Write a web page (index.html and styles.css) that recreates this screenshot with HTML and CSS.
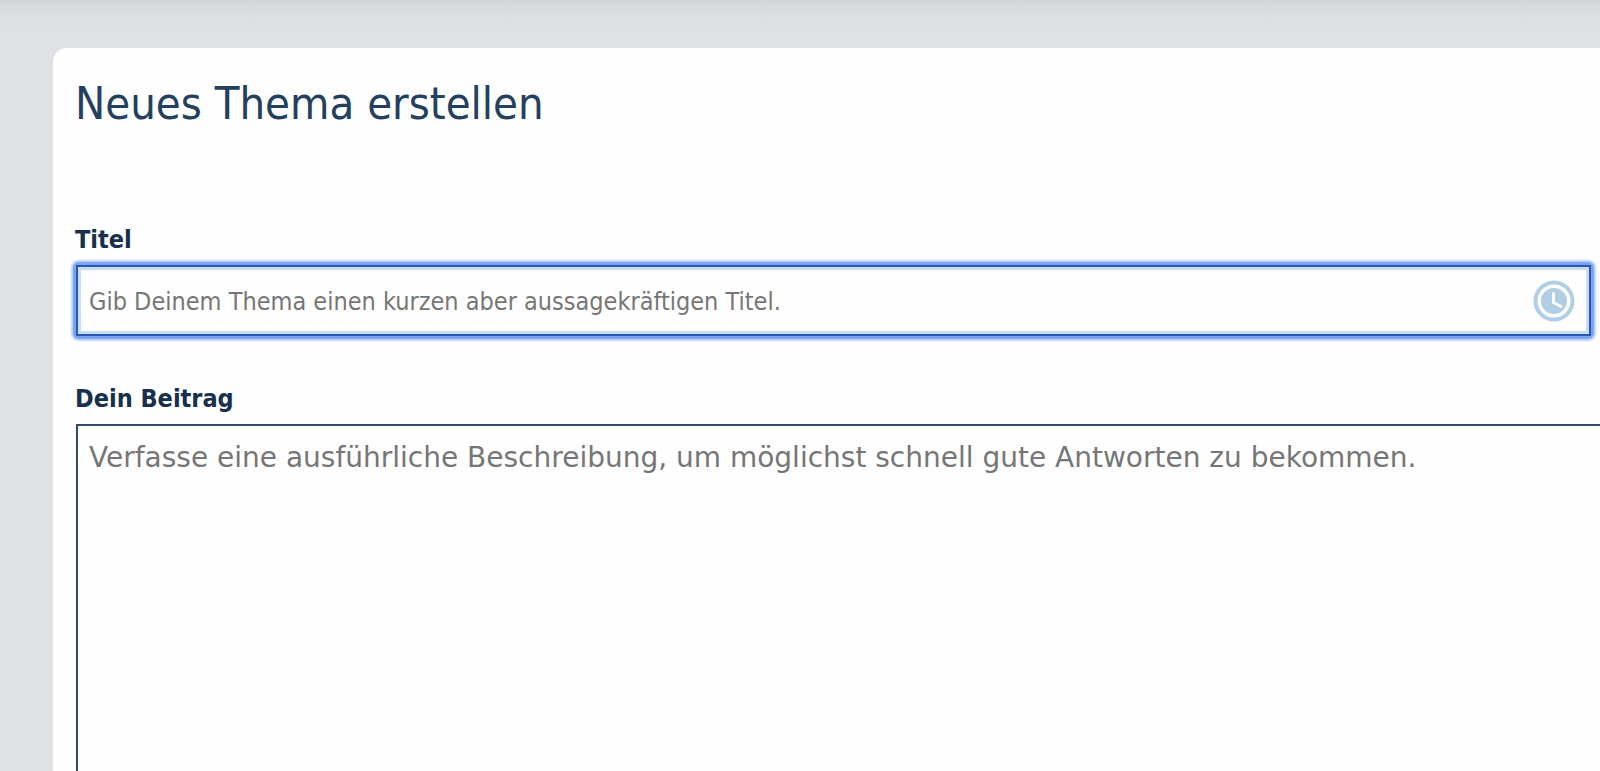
FILE: index.html
```
<!DOCTYPE html>
<html lang="de">
<head>
<meta charset="utf-8">
<title>Neues Thema erstellen</title>
<link rel="stylesheet" href="styles.css">
</head>
<body>
<main class="card">
  <h1 class="heading">Neues Thema erstellen</h1>
  <form class="form">
    <div class="field title-field">
      <label class="label" for="title">Titel</label>
      <div class="title-box">
        <input class="title-input" id="title" type="text" placeholder="Gib Deinem Thema einen kurzen aber aussagekräftigen Titel.">
        <svg class="clock" viewBox="0 0 42 42" aria-hidden="true">
          <circle cx="21" cy="21" r="18.500" fill="none" stroke="#b0cfe5" stroke-width="4"/>
          <circle cx="21" cy="21" r="13" fill="#b0cfe5"/>
          <path d="M20.500 12.500V22.500L29 27" fill="none" stroke="#fff" stroke-width="3"/>
        </svg>
      </div>
    </div>
    <div class="field post-field">
      <label class="label" for="post">Dein Beitrag</label>
      <textarea class="post-input" id="post" placeholder="Verfasse eine ausführliche Beschreibung, um möglichst schnell gute Antworten zu bekommen."></textarea>
    </div>
  </form>
</main>
</body>
</html>
```
FILE: styles.css
```
* {
  box-sizing: border-box;
}

body {
  margin: 0;
  min-height: 100vh;
  padding: 48px 0 0 53px;
  display: flex;
  overflow: hidden;
  background: linear-gradient(#d3d4d8, #dcdde1 10px, #e0e1e5 28px);
  font-family: Tahoma, "DejaVu Sans Condensed", "DejaVu Sans", sans-serif;
}

.card {
  flex: 1;
  display: flex;
  flex-direction: column;
  padding: 28px 0 0 22px;
  border-top-left-radius: 14px;
  background: #fefefe;
}

.heading {
  margin: 0;
  font-size: 45px;
  line-height: 56px;
  font-weight: 400;
  color: #24405f;
}

.form {
  flex: 1;
  display: flex;
  flex-direction: column;
  gap: 47px;
  margin-top: 92px;
}

.field {
  display: flex;
  flex-direction: column;
}

.title-field {
  margin-right: 9px;
}

.post-field {
  flex: 1;
}

.label {
  font-size: 25px;
  line-height: 32px;
  font-weight: 700;
  color: #17304d;
}

.title-box {
  position: relative;
  margin: 9px 0 0 1px;
  border-radius: 3px;
  box-shadow: 0 0 1px 3px #7aa2ee, 0 0 2px 5px #bcd3fb;
}

.title-input {
  display: block;
  width: 100%;
  height: 71px;
  padding: 2px 70px 0 11px;
  border: 2px solid #2a58b5;
  border-radius: 0;
  outline: none;
  background: #fefefe;
  box-shadow: inset 0 0 0 3px #c8dcfb;
  font-family: inherit;
  font-size: 25px;
  color: #24405f;
}

.clock {
  position: absolute;
  top: 15px;
  right: 16px;
  width: 42px;
  height: 42px;
}

.post-input {
  flex: 1;
  margin: 9px 0 0 1px;
  padding: 15px 11px;
  border: 2px solid #334b66;
  border-width: 2px 0 0 2px;
  border-radius: 0;
  outline: none;
  resize: none;
  background: #fefefe;
  font-family: Verdana, "DejaVu Sans", sans-serif;
  font-size: 28px;
  line-height: 34px;
  color: #24405f;
}

.title-input::placeholder,
.post-input::placeholder {
  color: #767676;
  opacity: 1;
}
```
